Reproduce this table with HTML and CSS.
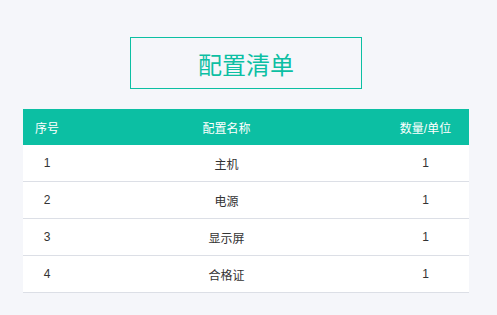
FILE: index.html
```html
<!DOCTYPE html>
<html lang="zh">
<head>
<meta charset="utf-8">
<link rel="stylesheet" href="styles.css">
</head>
<body>
<div class="page">
  <div class="title-box"><h1 class="title">配置清单</h1></div>
  <table class="list">
    <thead>
      <tr><th class="c1">序号</th><th class="c2">配置名称</th><th class="c3">数量/单位</th></tr>
    </thead>
    <tbody>
      <tr><td>1</td><td>主机</td><td>1</td></tr>
      <tr><td>2</td><td>电源</td><td>1</td></tr>
      <tr><td>3</td><td>显示屏</td><td>1</td></tr>
      <tr><td>4</td><td>合格证</td><td>1</td></tr>
    </tbody>
  </table>
</div>
</body>
</html>
```
FILE: styles.css
```css
html, body {
  margin: 0;
  padding: 0;
  background: #f5f6fa;
  font-family: "Liberation Sans", "Noto Sans CJK SC", sans-serif;
}
.page {
  display: flex;
  flex-direction: column;
  align-items: flex-start;
  padding: 37px 0 0 23px;
}
.title-box {
  box-sizing: border-box;
  width: 232px;
  height: 52px;
  margin-left: 107px;
  border: 1px solid #0cbfa3;
  display: flex;
  align-items: center;
  justify-content: center;
}
.title {
  margin: 0;
  font-family: "Noto Sans CJK SC", sans-serif;
  font-weight: normal;
  font-size: 24px;
  line-height: 1;
  color: #0cbfa3;
  padding-top: 2px;
}
.list {
  margin-top: 20px;
  width: 446px;
  border-collapse: collapse;
  table-layout: fixed;
  background: #fff;
  font-size: 12px;
}
.list th {
  background: #0cbfa3;
  color: #fff;
  font-weight: normal;
  height: 36px;
  padding: 0;
  text-align: center;
}
.c1 { width: 48px; }
.c3 { width: 87px; }
.list td {
  height: 36px;
  padding: 0;
  text-align: center;
  color: #333;
  border-bottom: 1px solid #dcdfe6;
}
```
